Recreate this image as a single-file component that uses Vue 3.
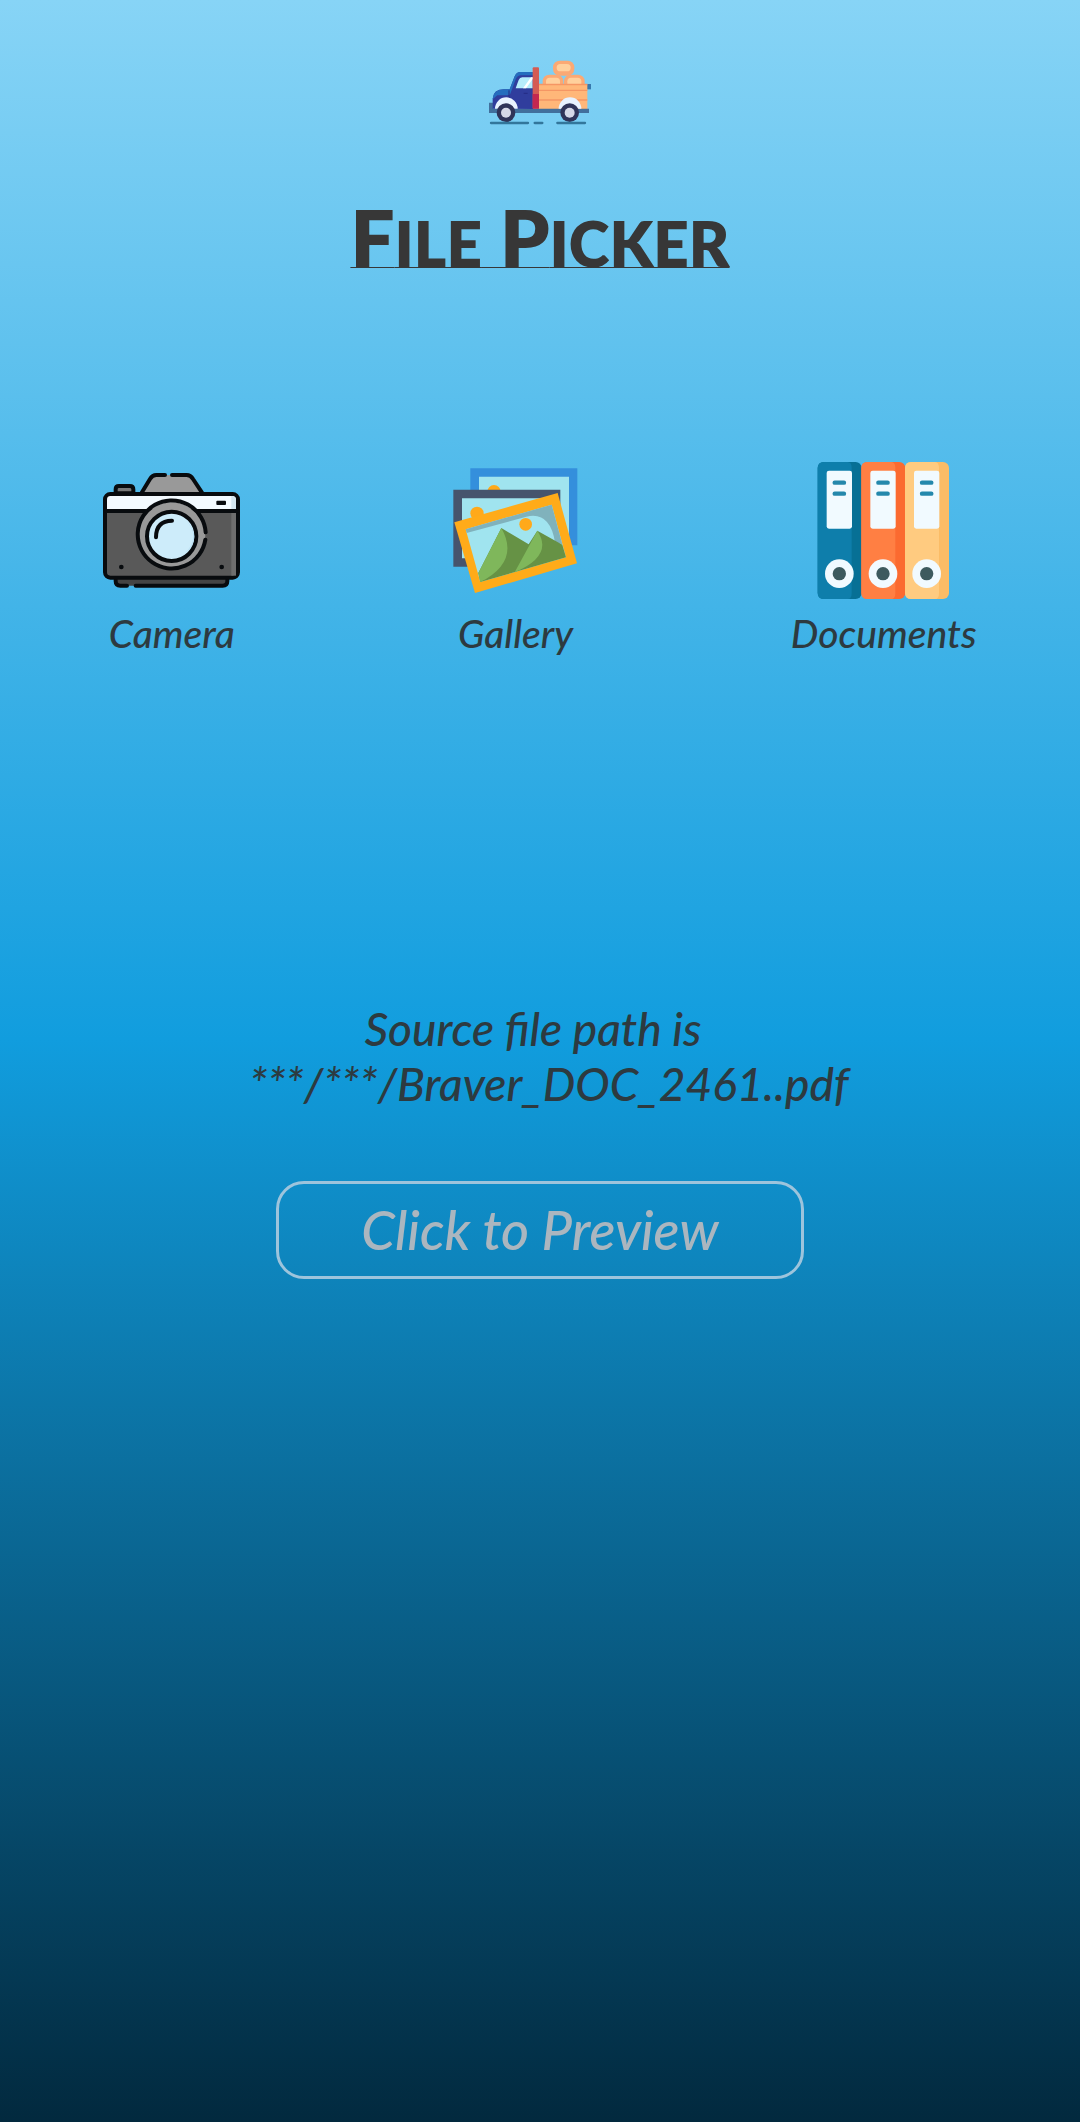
<script setup>
const lines = ['Source file path is   ', '***/***/Braver_DOC_2461..pdf']
const binders = [
  { x: 118, base: '#0e7eab', shade: '#077095' },
  { x: 249, base: '#ff7f43', shade: '#fb6a30' },
  { x: 380, base: '#ffcb80', shade: '#fbbc66' },
]
</script>

<template>
  <main class="screen">
    <svg class="truck" viewBox="57 62 306 195" aria-hidden="true">
      <g fill="#fba974">
        <rect x="249" y="64" width="64" height="45" rx="20" />
        <rect x="218" y="106" width="62" height="50" rx="20" />
        <rect x="282" y="106" width="62" height="50" rx="20" />
      </g>
      <g fill="#ffd09c">
        <rect x="260" y="74" width="42" height="22" rx="11" />
        <rect x="228" y="115" width="42" height="30" rx="11" />
        <rect x="292" y="115" width="42" height="30" rx="11" />
      </g>
      <path d="M351 134h12v16h-12z" fill="#3778ad" />
      <path d="M207 135h145v75H207z" fill="#ffb779" />
      <path d="M207 133h145v5H207zM207 151h145v4H207zM207 180h145v4H207z" fill="#f59664" />
      <path d="M57 190h12v18h288v13H57z" fill="#416f9c" />
      <path d="M68 208v-30q2-28 34-28h17l15-39q5-13 18-13h38v111z" fill="#303d9d" />
      <path d="M68 180q2-30 34-30h17l15-39q5-13 18-13h38v10h-37q-11 0-16 12l-16 43q-2 5-10 5H82z" fill="#246dbe" />
      <path d="M137 147l9-25q3-8 11-8h31v33z" fill="#b6edfb" />
      <path d="M159 147l24-33h9l-24 33z" fill="#fff" />
      <path d="M117 153v55M161 162h12" fill="none" stroke="#252c85" stroke-width="3" />
      <rect x="188" y="84" width="19" height="124" rx="3" fill="#d45b54" />
      <path d="M188 164h19v44h-19z" fill="#c42750" />
      <path d="M75 208a34 34 0 0 1 68 0zM266 208a34 34 0 0 1 68 0z" fill="#e8f2ff" />
      <g fill="#303459"><circle cx="108" cy="220" r="28" /><circle cx="299" cy="220" r="28" /></g>
      <g fill="#d5d8e7"><circle cx="108" cy="220" r="15" /><circle cx="299" cy="220" r="15" /></g>
      <path d="M63 251h111M194 251h23M262 251h83" stroke="#32769b" stroke-width="7" stroke-linecap="round" />
    </svg>

    <h1 class="title">F<span>ile</span> P<span>icker</span></h1>

    <nav class="sources">
      <button class="source" type="button">
        <svg class="icon" viewBox="39 36 411 411" aria-hidden="true">
          <g stroke="#080b0e" stroke-width="12" stroke-linejoin="round" stroke-linecap="round">
            <path d="M77 130v-12q0-10 10-10h32q11 0 11 10v12z" fill="#777" />
            <path d="M155 130l25-43q7-12 19-12h91q12 0 19 12l27 43z" fill="#999" stroke="none" />
            <path d="M155 128l25-41q7-12 19-12h26M246 75h44q12 0 19 12l27 41" fill="none" />
            <path d="M77 385v8q0 14 14 14h307q14 0 14-14v-8z" fill="#444" stroke="none" />
            <path d="M77 389v4q0 14 14 14h20M137 407h261q14 0 14-14v-4" fill="none" />
            <rect x="45" y="132" width="399" height="251" rx="16" fill="#595959" />
            <path d="M51 183v-34q0-11 11-11h365q11 0 11 11v34z" fill="#f3faff" stroke="none" />
            <path d="M424 184h14v193h-14z" fill="#6e6e6e" stroke="none" />
            <path d="M424 138q14 0 14 14v30h-14z" fill="#d4e7f1" stroke="none" />
            <path d="M47 183h395" fill="none" />
            <circle cx="245" cy="258" r="101" fill="#999" stroke="none" />
            <path d="M347 247A102 102 0 1 0 346 269" fill="none" />
            <circle cx="245" cy="259" r="74" fill="#cdecfa" />
            <path d="M198 262q0-50 48-50" fill="none" />
          </g>
          <path d="M284 207q52 52 0 104q58-48 0-104" fill="#b8dff4" />
          <rect x="379" y="152" width="29" height="13" rx="3" fill="#080b0e" />
          <circle cx="94" cy="351" r="7" fill="#080b0e" />
          <circle cx="395" cy="351" r="7" fill="#080b0e" />
        </svg>
        <span>Camera</span>
      </button>

      <button class="source" type="button">
        <svg class="icon" viewBox="54 36 411 411" aria-hidden="true">
          <path d="M124 55h321v231H124z" fill="#348fdc" />
          <path d="M150 80h270v180H150z" fill="#a0e4ef" />
          <circle cx="195" cy="125" r="20" fill="#ffa91a" />
          <path d="M73 119h321v231H73z" fill="#46546d" />
          <path d="M99 145h270v180H99z" fill="#a0e4ef" />
          <circle cx="144" cy="190" r="20" fill="#ffa91a" />
          <path d="M76 217L386 129 444 340 138 429z" fill="#ffab19" />
          <path d="M110 238L368 164 411 322 154 396z" fill="#a0e4ef" />
          <path d="M110 238L368 164 400 283 378 277Q363 183 292 200L113 249z" fill="#80b2bc" />
          <path d="M154 396l-6-27 69-135 82 49 26-41 75 42 11 38z" fill="#669245" />
          <path d="M217 234q57 100-63 162l-6-27zM325 242q50 75-68 125z" fill="#7fb75b" />
          <circle cx="290" cy="223" r="19" fill="#ffa91a" />
        </svg>
        <span>Gallery</span>
      </button>

      <button class="source" type="button">
        <svg class="icon" viewBox="110 36 411 411" aria-hidden="true">
          <g v-for="b in binders" :key="b.x" :transform="`translate(${b.x} 36)`">
            <rect width="132" height="411" rx="18" :fill="b.shade" />
            <path d="M18 0h72q12 0 12 18v375q0 18-12 18H18q-18 0-18-18V18Q0 0 18 0z" :fill="b.base" />
            <rect x="27" y="26" width="76" height="174" rx="7" fill="#f1faff" />
            <path d="M51 62h28M51 95h28" stroke="#2488ac" stroke-width="13" stroke-linecap="round" />
            <circle cx="65" cy="335" r="43" fill="#f1faff" />
            <circle cx="65" cy="335" r="20" fill="#3d5a5e" />
          </g>
        </svg>
        <span>Documents</span>
      </button>
    </nav>

    <p class="path">
      <span v-for="line in lines" :key="line">{{ line }}</span>
    </p>

    <button class="preview" type="button">Click to Preview</button>
  </main>
</template>

<style>
body {
  margin: 0;
}
</style>

<style scoped>
.screen {
  box-sizing: border-box;
  min-height: 100vh;
  padding-top: 60px;
  display: flex;
  flex-direction: column;
  align-items: center;
  background: linear-gradient(#87d4f6, #119dde 49%, #02293e);
  color: #2d3a40;
  font-family: Lato, "Open Sans", sans-serif;
}

.truck {
  width: 102px;
  height: 65px;
}

.title {
  margin: 66px 0 0;
  color: #373737;
  font-size: 78px;
  font-weight: 800;
  line-height: 92px;
  text-transform: uppercase;
  text-decoration: underline 1px;
  text-underline-offset: 0;
  text-decoration-skip-ink: none;
}

.title span {
  font-size: 62px;
}

.sources {
  align-self: stretch;
  margin-top: 173px;
  display: flex;
  justify-content: space-around;
}

.source {
  padding: 0;
  border: 0;
  background: none;
  display: flex;
  flex-direction: column;
  align-items: center;
  gap: 10px;
  color: inherit;
  font: italic 500 39px/48px Lato, "Open Sans", sans-serif;
}

.icon {
  width: 137px;
  height: 137px;
}

.path {
  margin: 344px 0 0;
  padding-left: 18px;
  display: flex;
  flex-direction: column;
  align-items: center;
  font-size: 46px;
  font-style: italic;
  font-weight: 500;
  line-height: 55px;
  white-space: pre;
}

.preview {
  margin-top: 70px;
  padding: 0 82px;
  border: 3px solid #9dc4dc;
  border-radius: 28px;
  background: none;
  color: #abb6bf;
  font: italic 500 54px/92px Lato, "Open Sans", sans-serif;
}
</style>
